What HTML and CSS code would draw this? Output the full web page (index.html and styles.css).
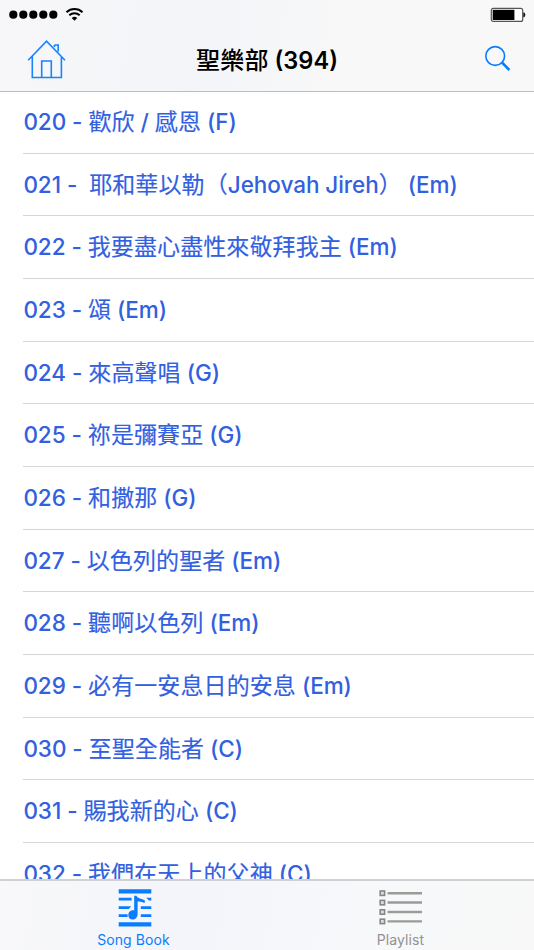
FILE: index.html
```html
<!DOCTYPE html>
<html lang="zh-Hant">
<head>
<meta charset="utf-8">
<title>聖樂部</title>
<link rel="stylesheet" href="styles.css">
</head>
<body>
<div class="app">
  <header class="top">
    <div class="status">
      <svg class="signal" width="76" height="16" viewBox="0 0 76 16">
        <g fill="#000"><circle cx="5.3" cy="7.7" r="4.1"/><circle cx="15.3" cy="7.7" r="4.1"/><circle cx="25.3" cy="7.7" r="4.1"/><circle cx="35.3" cy="7.7" r="4.1"/><circle cx="45.3" cy="7.7" r="4.1"/><path d="M66.5 13.8l-2.8-2.8a4.2 4.2 0 0 1 5.6 0z"/></g>
        <g fill="none" stroke="#000" stroke-width="2"><path d="M58.5 5.2a11.6 11.6 0 0 1 16 0"/><path d="M61.3 8.2a7.6 7.6 0 0 1 10.4 0"/></g>
      </svg>
      <svg class="battery" width="36" height="16" viewBox="0 0 36 16">
        <rect x="1.3" y="1.4" width="31.4" height="13" rx="2" fill="#fff" stroke="#555" stroke-width="1.2"/>
        <rect x="2.7" y="2.8" width="21.7" height="10.2" fill="#000"/>
        <path d="M33.3 5.4h1q2 2.3 0 4.8h-1z" fill="#111"/>
      </svg>
    </div>
    <nav class="bar">
      <svg class="home" width="40" height="42" viewBox="0 0 40 42" fill="none" stroke="#1683ff" stroke-width="1.6">
        <path d="M1.2 21.2L19.5 2.2L38 21.2M5.3 17.5V38.5H34.4V17.8M14.7 38.5V22H24.3V38.5M27.4 6H31.2V12.5M27.4 6V8"/>
      </svg>
      <h1><span class="zh">聖樂部</span> (394)</h1>
      <svg class="search" width="28" height="28" viewBox="0 0 28 28" fill="none" stroke="#087cff">
        <circle cx="11.2" cy="11" r="9.4" stroke-width="1.6"/><path d="M18 17.5L25.4 25" stroke-width="2.5"/>
      </svg>
    </nav>
  </header>
  <main class="songs">
    <div class="row">020 - <span class="zh">歡欣</span> / <span class="zh">感恩</span> (F)</div>
    <div class="row">021 -&nbsp; <span class="zh">耶和華以勒（</span>Jehovah Jireh<span class="zh">）</span> (Em)</div>
    <div class="row">022 - <span class="zh">我要盡心盡性來敬拜我主</span> (Em)</div>
    <div class="row">023 - <span class="zh">頌</span> (Em)</div>
    <div class="row">024 - <span class="zh">來高聲唱</span> (G)</div>
    <div class="row">025 - <span class="zh">祢是彌賽亞</span> (G)</div>
    <div class="row">026 - <span class="zh">和撒那</span> (G)</div>
    <div class="row">027 - <span class="zh">以色列的聖者</span> (Em)</div>
    <div class="row">028 - <span class="zh">聽啊以色列</span> (Em)</div>
    <div class="row">029 - <span class="zh">必有一安息日的安息</span> (Em)</div>
    <div class="row">030 - <span class="zh">至聖全能者</span> (C)</div>
    <div class="row">031 - <span class="zh">賜我新的心</span> (C)</div>
    <div class="row">032 - <span class="zh">我們在天上的父神</span> (C)</div>
  </main>
  <footer class="tabs">
    <div class="tab active">
      <svg width="34" height="40" viewBox="0 0 34 40">
        <path fill="#0a7cff" d="M.7 1.3h32.6v4.2H.7zM.7 9.8h12.9v2.8H.7zM.7 18.2h12.5l-2.4 2.8H.7zM.7 26.2h8.9v2.8H.7zM.7 34.2h32.6v4.2H.7zM22.8 18.2h10.5v2.8h-10.5zM22.8 26.2h10.5v2.8h-10.5zM28.3 9.8h5v2.8h-2.4z"/>
        <path fill="#0a7cff" d="M16.2 7.8h2.2c1.3 3 5.4 2.6 8.8 4.9l-.8 2.3c-2.6-1.3-4.7-1.6-6.8-1.6V26c0 3.2-2.3 5.6-4.9 5.6-2.3 0-4.4-1.9-4.4-4.7 0-3.1 2.8-5.2 5.9-4.6z"/>
      </svg>
      <span>Song Book</span>
    </div>
    <div class="tab">
      <svg width="44" height="40" viewBox="0 0 44 40">
        <g fill="#ddd" stroke="#868686" stroke-width="1.6"><rect x="1.2" y="3" width="4.4" height="4.4"/><rect x="1.2" y="12.4" width="4.4" height="4.4"/><rect x="1.2" y="21.8" width="4.4" height="4.4"/><rect x="1.2" y="31.2" width="4.4" height="4.4"/></g>
        <path d="M8.5 5.3H43M8.5 14.5H43M8.5 24H43M8.5 33.4H43" stroke="#9b9b97" stroke-width="2.4"/>
      </svg>
      <span>Playlist</span>
    </div>
  </footer>
</div>
</body>
</html>
```
FILE: styles.css
```css
* { box-sizing: border-box; }
body { margin: 0; background: #fff; font-family: Inter, "Noto Sans CJK TC", sans-serif; }
.app { height: 950px; display: flex; flex-direction: column; overflow: hidden; }
.top { height: 92px; flex: none; border-bottom: 1px solid #bcbdc0; background: linear-gradient(100deg, #f7f7f8 0%, #f3f5f9 38%, #f8f8f8 65%); }
.status { height: 30px; padding: 7px 8px 0; display: flex; justify-content: space-between; }
.status svg, .bar svg, .tab svg { display: block; flex: none; }
.bar { height: 61px; padding: 0 22px 0 27px; display: grid; grid-template-columns: 40px 1fr 28px; align-items: center; }
.home { margin-top: -1px; }
.search { margin-top: -4px; }
h1 { margin: 0 17px 0 0; font-size: 23.6px; font-weight: 600; line-height: 30px; text-align: center; color: #000; white-space: nowrap; }
.zh { font-family: "Noto Sans CJK TC", sans-serif; font-size: 23px; letter-spacing: .1px; line-height: 1; -webkit-text-stroke: .15px currentColor; }
h1 .zh { font-weight: 500; font-size: 24px; letter-spacing: .2px; -webkit-text-stroke: 0; }
.songs { flex: 1; min-height: 0; overflow: hidden; padding-left: 23px; }
.row { height: 62.67px; border-bottom: 1px solid #d6d6d8; line-height: 61.4px; font-size: 22.5px; font-weight: 540; color: #3260df; white-space: pre; padding-left: .4px; letter-spacing: -.05px; }
.row:first-child { height: 61.6px; line-height: 60px; }
.row .zh { font-weight: 400; }
.tabs { height: 71px; flex: none; border-top: 2px solid #d0d1d3; background: linear-gradient(100deg, #f8f8f9, #f3f5fa 35%, #f7f8fa 65%, #f8f8f8); display: grid; grid-template-columns: 1fr 1fr; }
.tab { display: flex; flex-direction: column; align-items: center; padding-top: 7px; font-size: 14px; line-height: 20px; color: #929292; letter-spacing: .1px; }
.tab span { margin-top: 2px; }
.active { color: #0a7cff; }
.active svg { margin-left: 2px; }
```
